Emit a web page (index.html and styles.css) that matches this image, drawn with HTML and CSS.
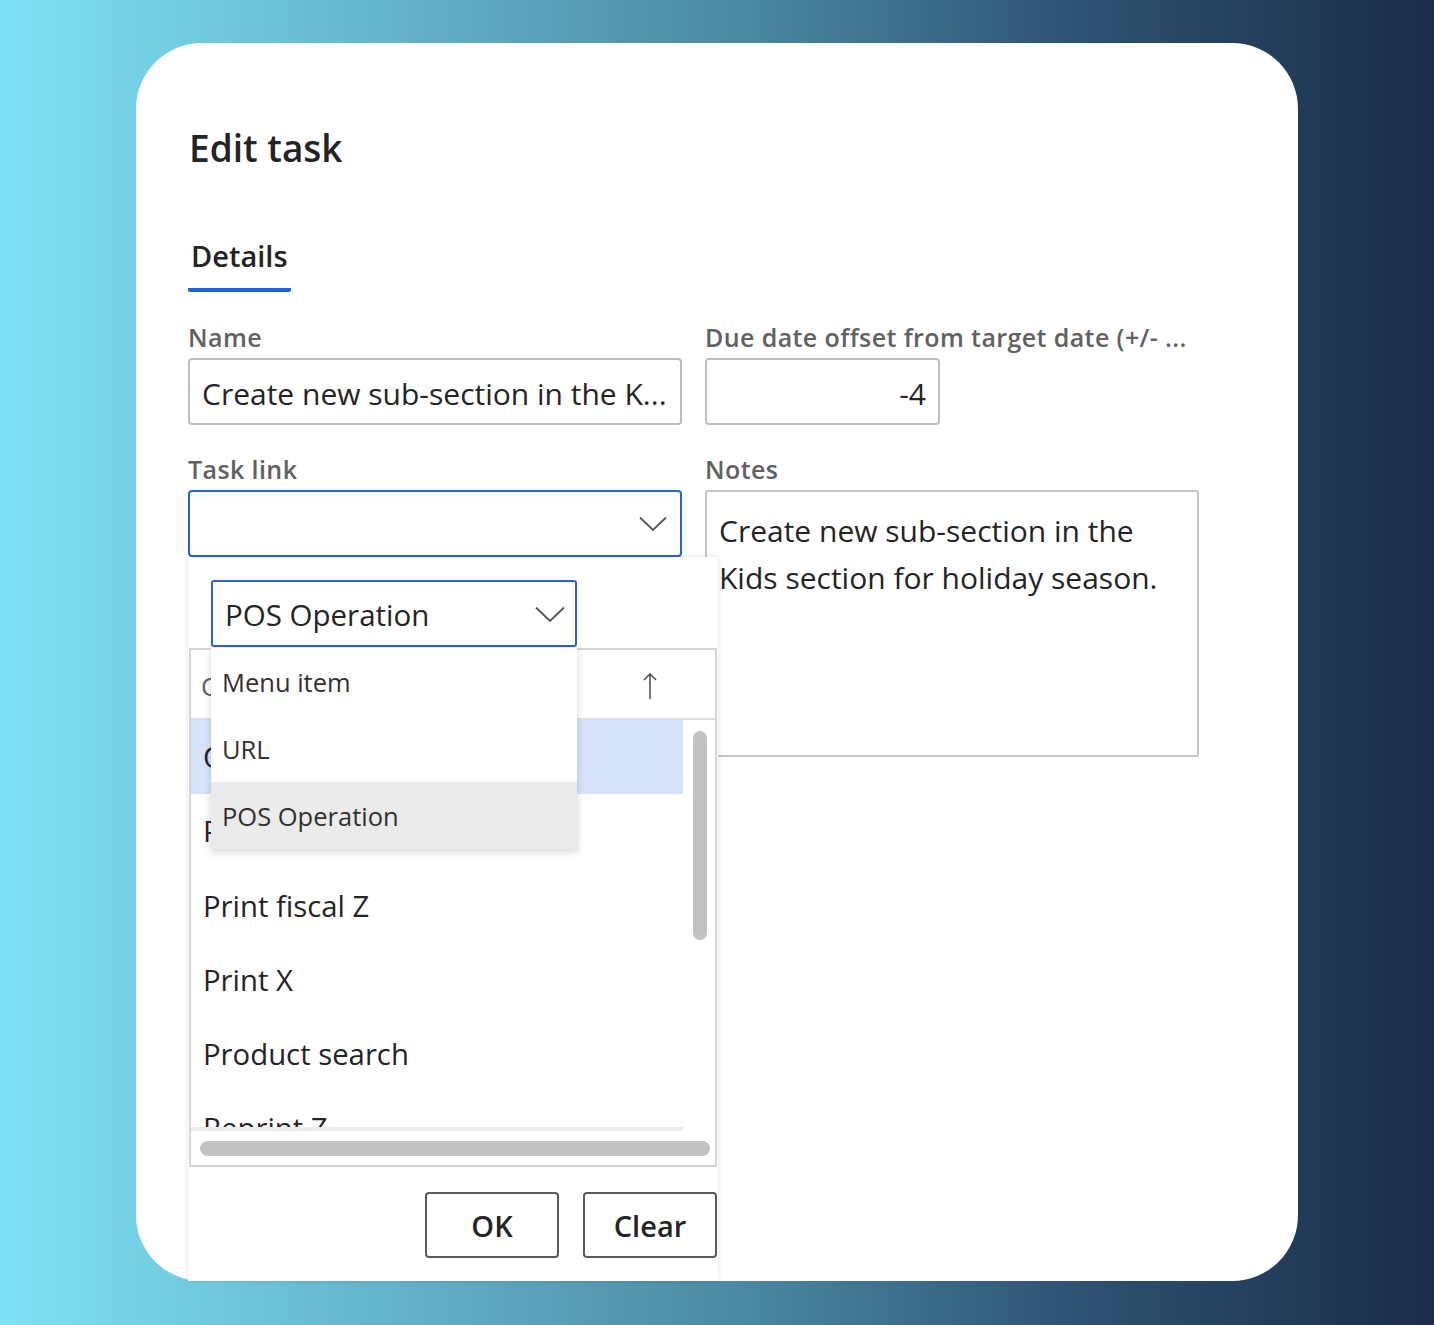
FILE: index.html
```html
<!DOCTYPE html>
<html lang="en">
<head>
    <meta charset="UTF-8">
    <meta name="viewport" content="width=device-width, initial-scale=1.0">
    <title>Edit task</title>
    <link rel="stylesheet" href="styles.css">
</head>
<body>
    <div class="card">
        <h1 class="title">Edit task</h1>
        <div class="tabs">
            <div class="tab active">Details</div>
        </div>
        <div class="form-grid">
            <div class="field">
                <label>Name</label>
                <div class="input">Create new sub-section in the K...</div>
            </div>
            <div class="field">
                <label>Due date offset from target date (+/- ...</label>
                <div class="input input-num">-4</div>
            </div>
            <div class="field">
                <label>Task link</label>
                <div class="input input-select focused">
                    <svg class="chev" width="28" height="16" viewBox="0 0 28 16"><path d="M1 1.5 L14 14 L27 1.5" fill="none" stroke="#555" stroke-width="1.8"/></svg>
                </div>
            </div>
            <div class="field">
                <label>Notes</label>
                <div class="textarea">Create new sub-section in the<br>Kids section for holiday season.</div>
            </div>
        </div>

        <!-- lookup flyout for task link -->
        <div class="flyout">
            <div class="flyout-top">
                <div class="type-select">
                    <span>POS Operation</span>
                    <svg class="chev" width="30" height="17" viewBox="0 0 30 17"><path d="M1 1.5 L15 15 L29 1.5" fill="none" stroke="#555" stroke-width="1.8"/></svg>
                </div>
            </div>
            <div class="grid-box">
                <div class="grid-head">
                    <span>Operation</span>
                    <svg class="sort" width="14" height="28" viewBox="0 0 14 28"><path d="M7 2 L7 27 M1 8 L7 2 L13 8" fill="none" stroke="#555" stroke-width="1.6"/></svg>
                </div>
                <div class="grid-body">
                    <div class="rows">
                        <div class="row selected">Open drawer</div>
                        <div class="row">Print fiscal X</div>
                        <div class="row">Print fiscal Z</div>
                        <div class="row">Print X</div>
                        <div class="row">Product search</div>
                        <div class="row">Reprint Z</div>
                        <div class="rows-fade"></div>
                    </div>
                    <div class="vscroll"><div class="thumb"></div></div>
                </div>
                <div class="hscroll"><div class="thumb"></div></div>
            </div>
            <div class="flyout-foot">
                <button type="button" class="btn">OK</button>
                <button type="button" class="btn">Clear</button>
            </div>

            <div class="menu">
                <div class="menu-item">Menu item</div>
                <div class="menu-item">URL</div>
                <div class="menu-item current">POS Operation</div>
            </div>
        </div>
    </div>
</body>
</html>
```

FILE: styles.css
```css
body {
    margin: 0;
    height: 1325px;
    overflow: hidden;
    background: linear-gradient(90deg, #7fe2f4 0%, #5eaac1 33%, #4a89a0 52%, #2c5170 76%, #1a2c48 100%);
    font-family: "Open Sans", "Noto Sans", sans-serif;
    color: #242424;
}

.card {
    position: relative;
    margin: 43px 0 0 136px;
    width: 1162px;
    height: 1238px;
    box-sizing: border-box;
    padding: 79px 0 0 53px;
    background: #fff;
    border-radius: 66px;
}

.title {
    margin: 0;
    font-size: 37px;
    line-height: 52px;
    font-weight: 600;
}

.tabs {
    display: flex;
    margin-top: 62px;
}

.tab {
    font-size: 29px;
    line-height: 40px;
    font-weight: 600;
    padding: 0 3px 12px 3px;
    margin-left: -1px;
    border-bottom: 4px solid transparent;
}

.tab.active {
    border-color: #2164d1;
    border-radius: 0 0 2px 2px;
}

.form-grid {
    display: grid;
    grid-template-columns: 494px 494px;
    column-gap: 23px;
    row-gap: 29px;
    margin-top: 30px;
    margin-left: -1px;
}

.field label {
    display: block;
    font-size: 25px;
    line-height: 30px;
    font-weight: 600;
    letter-spacing: 0.4px;
    color: #616161;
    margin-bottom: 6px;
    white-space: nowrap;
}

.input {
    box-sizing: border-box;
    height: 67px;
    border: 2px solid #bdbdbd;
    border-radius: 4px;
    padding: 2px 12px 0 12px;
    font-size: 30px;
    line-height: 63px;
    white-space: nowrap;
    overflow: hidden;
}

.input-num {
    width: 235px;
    text-align: right;
}

.input-select {
    display: flex;
    align-items: center;
    justify-content: flex-end;
    padding: 0 13px 0 0;
}

.focused {
    border-color: #2b64c8;
}

.textarea {
    box-sizing: border-box;
    height: 267px;
    border: 2px solid #c4c4c4;
    border-radius: 3px;
    padding: 15px 12px;
    font-size: 30px;
    line-height: 47px;
}

/* flyout */
.flyout {
    position: absolute;
    left: 52px;
    top: 514px;
    width: 530px;
    height: 724px;
    background: #fff;
    box-shadow: 0 0 5px rgba(0, 0, 0, 0.13);
}

.flyout-top {
    height: 91px;
    box-sizing: border-box;
    padding: 23px 0 0 23px;
}

.type-select {
    box-sizing: border-box;
    width: 366px;
    height: 67px;
    border: 2px solid #2b64c8;
    border-radius: 3px;
    padding: 2px 10px 0 12px;
    display: flex;
    align-items: center;
    justify-content: space-between;
    font-size: 29.5px;
}

.grid-box {
    box-sizing: border-box;
    margin-left: 1px;
    width: 528px;
    height: 519px;
    border: 2px solid #d4d4d4;
}

.grid-head {
    height: 70px;
    border-bottom: 2px solid #dedede;
    display: flex;
    align-items: center;
    padding: 4px 58px 0 10px;
    box-sizing: border-box;
    justify-content: space-between;
    font-size: 26px;
    color: #616161;
}

.grid-body {
    display: flex;
    height: 411px;
}

.rows {
    position: relative;
    width: 492px;
    overflow: hidden;
}

.row {
    height: 74.3px;
    line-height: 74px;
    padding-left: 12px;
    font-size: 29.3px;
    white-space: nowrap;
}

.row.selected {
    background: #d6e3fa;
}

.rows-fade {
    position: absolute;
    left: 0;
    right: 0;
    bottom: 0;
    height: 4px;
    background: #ececec;
}

.vscroll {
    flex: 1;
    padding: 11px 0 0 10px;
}

.vscroll .thumb {
    width: 14px;
    height: 209px;
    border-radius: 7px;
    background: #c2c2c2;
}

.hscroll {
    padding: 10px 0 0 9px;
}

.hscroll .thumb {
    width: 510px;
    height: 15px;
    border-radius: 8px;
    background: #c2c2c2;
}

.flyout-foot {
    display: flex;
    justify-content: flex-end;
    gap: 24px;
    padding: 25px 1px 0 0;
}

.btn {
    width: 134px;
    height: 66px;
    background: #fff;
    border: 2px solid #5a5a5a;
    border-radius: 4px;
    font-family: inherit;
    font-size: 29px;
    font-weight: 600;
    color: #242424;
}

.menu {
    position: absolute;
    left: 23px;
    top: 91px;
    width: 366px;
    background: #fff;
    box-shadow: 0 3px 8px rgba(0, 0, 0, 0.16);
}

.menu-item {
    height: 67px;
    line-height: 69px;
    padding-left: 11px;
    font-size: 25.5px;
    color: #323130;
}

.menu-item.current {
    background: #ebebeb;
}
```
